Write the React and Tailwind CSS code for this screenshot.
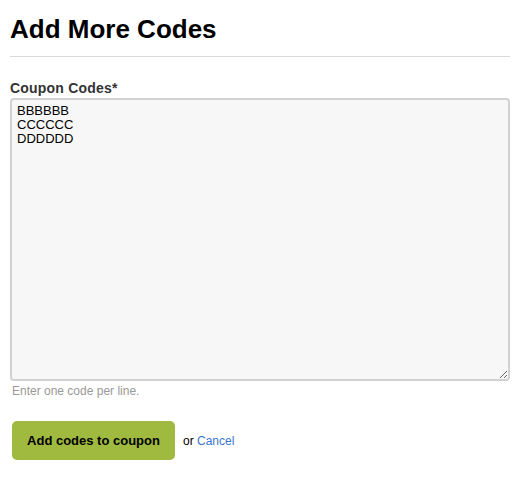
import React from "react";

export default function App() {
  return (
    <div className="bg-white w-[529px] h-[483px] pl-[10px] pt-[14px]" style={{ fontFamily: '"Liberation Sans", Arial, sans-serif' }}>
      <div className="w-[500px]">
        <h1 className="text-[26px] leading-[30px] font-bold text-black">Add More Codes</h1>
        <div className="mt-[12px] h-px bg-[#d9d9d9]" />
        <label className="block mt-[23px] text-[14px] leading-[17px] font-bold text-[#333] tracking-[0.2px]">Coupon Codes*</label>
        <textarea
          readOnly
          defaultValue={"BBBBBB\nCCCCCC\nDDDDDD"}
          className="block mt-[1px] w-[500px] h-[283px] border-2 border-[#d2d2d2] rounded-[4px] bg-[#f7f7f7] px-[5px] pt-[4px] text-[13px] leading-[14px] text-black outline-none"
          style={{ fontFamily: '"Liberation Sans", Arial, sans-serif' }}
        />
        <p className="mt-[3px] ml-[2px] text-[12px] leading-[14px] text-[#999]">Enter one code per line.</p>
        <div className="mt-[23px] ml-[2px] flex items-center">
          <button className="w-[163px] h-[39px] rounded-[5px] bg-[#9fba3f] text-[13px] font-bold text-black">Add codes to coupon</button>
          <span className="ml-[8px] text-[12px] text-black">or <a href="#" className="text-[#3a75d0]">Cancel</a></span>
        </div>
      </div>
    </div>
  );
}
